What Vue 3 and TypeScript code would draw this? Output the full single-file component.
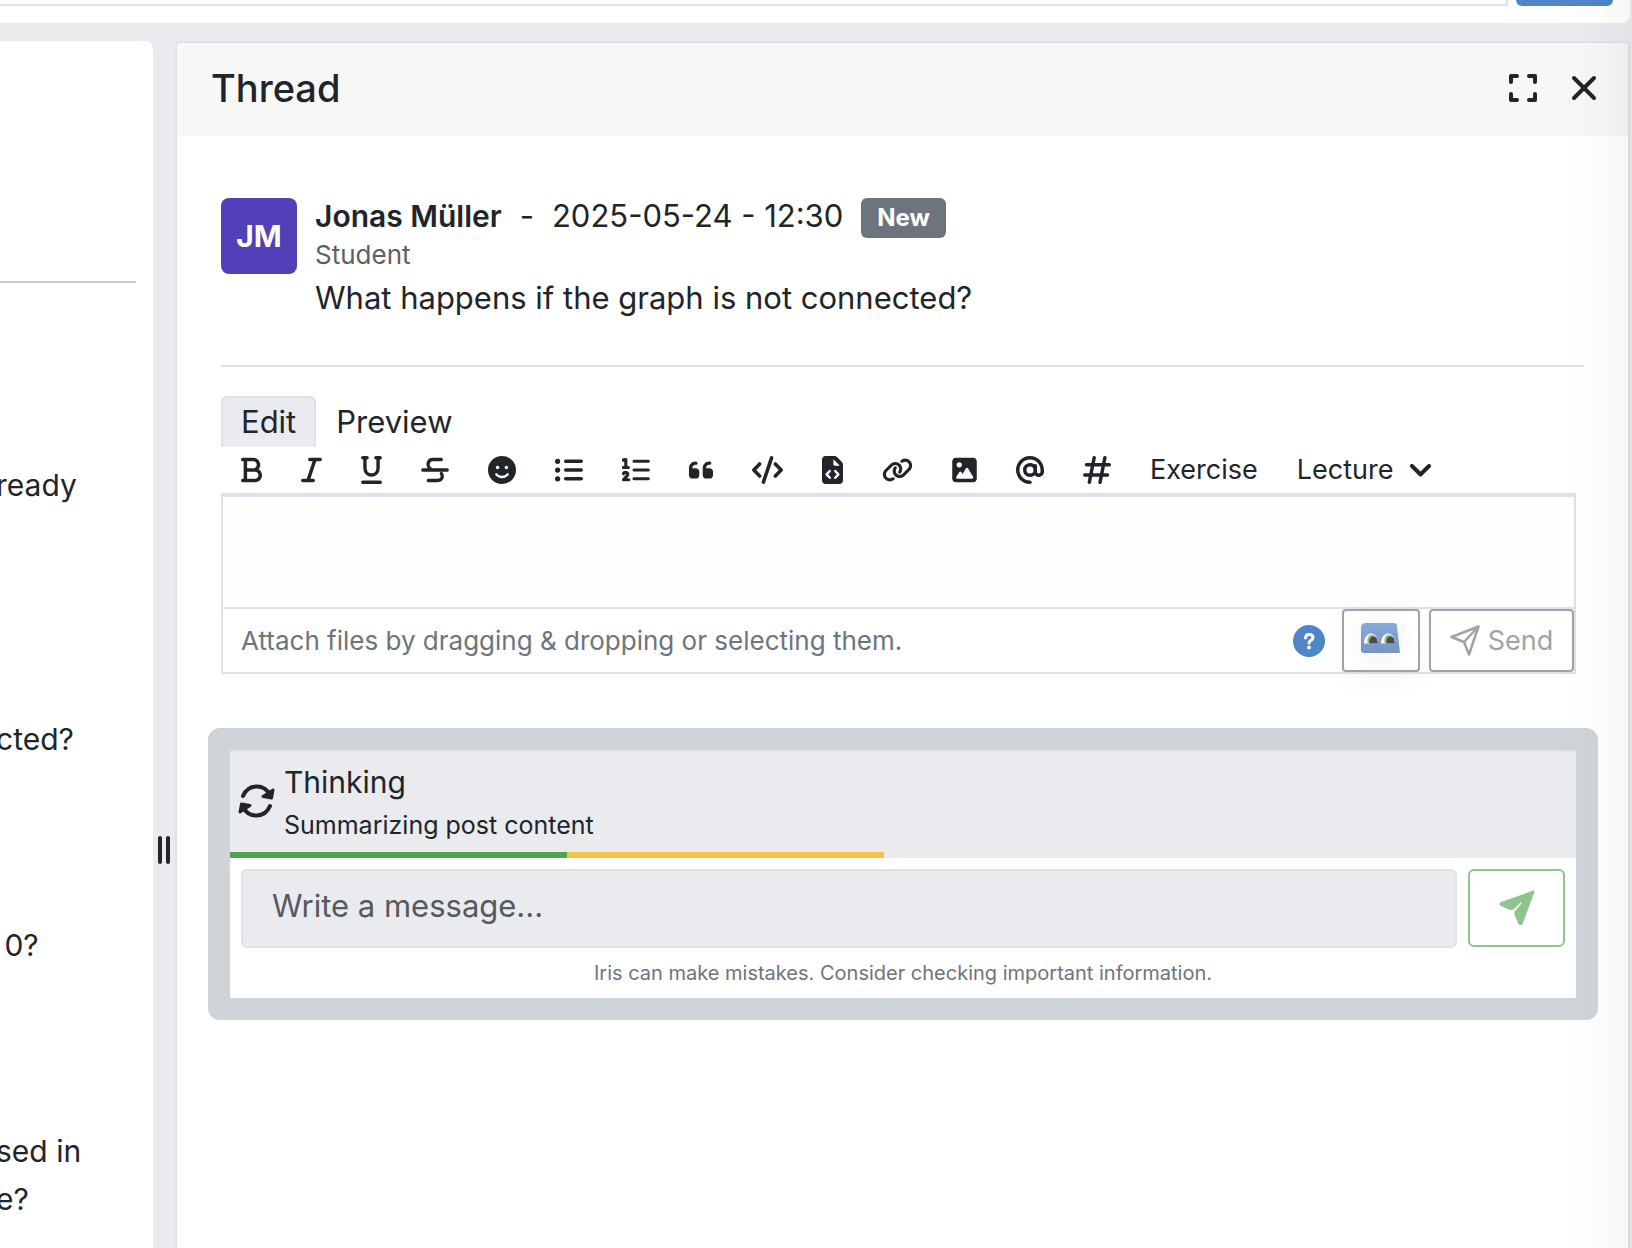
<script setup lang="ts">
import { ref } from 'vue'

interface ToolIcon {
  name: string
  width: number
  box: string
  fill?: string
  line?: string
  stroke?: number
  cutLine?: string
  cutStroke?: number
}

const leftPosts: { lines: string[] }[] = [
  { lines: ['ready'] },
  { lines: ['cted?'] },
  { lines: ['\u00a00?'] },
  { lines: ['sed in', 'e?'] },
]

const tools: ToolIcon[] = [
  {
    name: 'Bold', width: 21, box: '0 0 384 512',
    fill: 'M0 64C0 46 14 32 32 32H224c71 0 128 57 128 128c0 31-11 60-30 82c37 23 62 63 62 110c0 71-57 128-128 128H32c-18 0-32-14-32-32s14-32 32-32H48V96H32C14 96 0 82 0 64zM224 224c35 0 64-29 64-64s-29-64-64-64H112V224zM112 288V416H256c35 0 64-29 64-64s-29-64-64-64z',
  },
  { name: 'Italic', width: 21, box: '0 0 384 512', line: 'M160 64H352M32 448H224M256 64L128 448', stroke: 64 },
  { name: 'Underline', width: 21, box: '0 0 384 512', line: 'M32 32H112M272 32H352M72 32V220C72 390 312 390 312 220V32M32 480H352', stroke: 62 },
  { name: 'Strikethrough', width: 28, box: '0 0 512 512', line: 'M32 256H480M372 64H220C120 64 92 190 190 246M134 448H290C380 448 412 390 372 320', stroke: 60 },
  {
    name: 'Emoji', width: 28, box: '0 0 512 512',
    fill: 'M0 256a256 256 0 1 1 512 0a256 256 0 1 1-512 0zM176 176a32 32 0 1 0 0 64a32 32 0 1 0 0-64zM336 176a32 32 0 1 0 0 64a32 32 0 1 0 0-64z',
    cutLine: 'M152 336C200 400 312 400 360 336', cutStroke: 44,
  },
  {
    name: 'Unordered list', width: 28, box: '0 0 512 512',
    fill: 'M0 96a48 48 0 1 1 96 0a48 48 0 1 1-96 0zM0 256a48 48 0 1 1 96 0a48 48 0 1 1-96 0zM0 416a48 48 0 1 1 96 0a48 48 0 1 1-96 0z',
    line: 'M196 96H480M196 256H480M196 416H480', stroke: 64,
  },
  { name: 'Ordered list', width: 28, box: '0 0 512 512', line: 'M24 76L70 64V204M24 210H116M26 322C50 282 124 300 100 352L28 434H124M220 96H480M220 256H480M220 416H480', stroke: 58 },
  {
    name: 'Quote', width: 24, box: '0 0 448 512',
    fill: 'M0 216C0 149.700 53.700 96 120 96h8c17.700 0 32 14.300 32 32s-14.300 32-32 32h-8c-30.900 0-56 25.100-56 56v8h64c35.300 0 64 28.700 64 64v64c0 35.300-28.700 64-64 64H64c-35.300 0-64-28.700-64-64zm256 0c0-66.300 53.700-120 120-120h8c17.700 0 32 14.300 32 32s-14.300 32-32 32h-8c-30.900 0-56 25.100-56 56v8h64c35.300 0 64 28.700 64 64v64c0 35.300-28.700 64-64 64H320c-35.300 0-64-28.700-64-64z',
  },
  { name: 'Code', width: 31, box: '0 0 576 512', line: 'M364 32L212 480M142 144L34 256L142 368M434 144L542 256L434 368', stroke: 66 },
  {
    name: 'Code block', width: 21, box: '0 0 384 512',
    fill: 'M0 64C0 29 29 0 64 0h165c17 0 33 7 45 19l91 91c12 12 19 28 19 45v293c0 35-29 64-64 64H64c-35 0-64-29-64-64zM208 58v94c0 13 11 24 24 24h94z',
    cutLine: 'M142 274L84 336L142 398M242 274L300 336L242 398', cutStroke: 44,
  },
  {
    name: 'Link', width: 31, box: '0 0 640 512',
    fill: 'M579.800 267.700c56.500-56.500 56.500-148 0-204.500c-50-50-128.800-56.500-186.300-15.400l-1.600 1.100c-14.400 10.300-17.700 30.300-7.400 44.600s30.300 17.700 44.600 7.400l1.600-1.100c32.100-22.900 76-19.300 103.800 8.600c31.500 31.500 31.500 82.500 0 114L422.300 334.800c-31.500 31.500-82.500 31.500-114 0c-27.900-27.900-31.500-71.800-8.600-103.800l1.100-1.600c10.300-14.400 6.900-34.400-7.400-44.600s-34.400-6.900-44.600 7.400l-1.100 1.600C206.500 251.200 213 330 263 380c56.500 56.500 148 56.500 204.500 0zM60.200 244.300c-56.500 56.500-56.500 148 0 204.500c50 50 128.800 56.500 186.300 15.400l1.600-1.100c14.400-10.300 17.700-30.300 7.400-44.600s-30.300-17.700-44.600-7.400l-1.600 1.100c-32.100 22.900-76 19.300-103.800-8.600C74 372 74 321 105.500 289.500L217.700 177.200c31.500-31.500 82.500-31.500 114 0c27.900 27.900 31.500 71.800 8.600 103.900l-1.100 1.600c-10.300 14.400-6.900 34.400 7.400 44.600s34.400 6.900 44.600-7.400l1.100-1.600C433.500 260.800 427 182 377 132c-56.500-56.500-148-56.500-204.500 0z',
    line: 'M60 244',
    stroke: 1,
  },
  {
    name: 'Image', width: 25, box: '0 0 448 512',
    fill: 'M0 96c0-35 29-64 64-64h320c35 0 64 29 64 64v320c0 35-29 64-64 64H64c-35 0-64-29-64-64zM128 112a48 48 0 1 0 0 96a48 48 0 1 0 0-96zM92 416H360c20 0 30-20 20-36L288 226c-8-14-28-14-36 0l-62 102l-24-34c-9-13-27-13-36 0L74 380c-10 16 0 36 18 36z',
  },
  {
    name: 'Mention', width: 28, box: '0 0 512 512',
    fill: 'M256 64C150 64 64 150 64 256s86 192 192 192c17.700 0 32 14.300 32 32s-14.300 32-32 32C114.600 512 0 397.400 0 256S114.600 0 256 0S512 114.600 512 256v32c0 53-43 96-96 96c-29.300 0-55.600-13.200-73.200-33.900C320 371.100 289.500 384 256 384c-70.700 0-128-57.300-128-128s57.300-128 128-128c27.900 0 53.700 8.900 74.700 24.100c5.700-5 13.100-8.100 21.300-8.100c17.700 0 32 14.300 32 32v112c0 17.700 14.300 32 32 32s32-14.300 32-32V256c0-106-86-192-192-192zm64 192a64 64 0 1 0-128 0a64 64 0 1 0 128 0z',
  },
  { name: 'Channel', width: 28, box: '0 0 512 512', line: 'M204 32L116 480M400 32L312 480M64 160H480M32 348H448', stroke: 64 },
]

const progress = [
  { color: '#50a450', share: 25 },
  { color: '#f4c244', share: 23.6 },
]

const activeTab = ref('Edit')
const reply = ref('')
const message = ref('')
const search = ref('')
</script>

<template>
  <div class="page">
    <header class="topbar">
      <input v-model="search" class="search" type="text" aria-label="Search" />
      <button class="search-button" type="button" aria-label="Search"></button>
    </header>

    <div class="columns">
      <section class="posts">
        <hr class="posts-rule" />
        <div class="post-list">
          <p v-for="(post, i) in leftPosts" :key="i" class="post">
            <template v-for="line in post.lines" :key="line">{{ line }}<br /></template>
          </p>
        </div>
      </section>

      <div class="gutter"><i></i><i></i></div>

      <main class="thread">
        <header class="thread-head">
          <h1>Thread</h1>
          <button type="button" aria-label="Expand">
            <svg width="28" height="28" viewBox="0 0 28 28" fill="none" stroke="currentColor" stroke-width="4" stroke-linecap="round" stroke-linejoin="round">
              <path d="M2 8V2H8M20 2H26V8M2 20V26H8M20 26H26V20" />
            </svg>
          </button>
          <button type="button" aria-label="Close">
            <svg width="28" height="28" viewBox="0 0 28 28" fill="none" stroke="currentColor" stroke-width="4" stroke-linecap="round">
              <path d="M4 4L24 24M24 4L4 24" />
            </svg>
          </button>
        </header>

        <div class="thread-body">
          <article class="message">
            <div class="avatar">JM</div>
            <div class="message-text">
              <div class="byline">
                <strong>Jonas Müller</strong>
                <span>-</span>
                <time>2025-05-24 - 12:30</time>
                <span class="badge">New</span>
              </div>
              <div class="role">Student</div>
              <p class="question">What happens if the graph is not connected?</p>
            </div>
          </article>

          <section class="editor">
            <div class="tabs">
              <button
                v-for="tab in ['Edit', 'Preview']"
                :key="tab"
                type="button"
                class="tab"
                :class="{ active: activeTab === tab }"
                @click="activeTab = tab"
              >{{ tab }}</button>
            </div>
            <div class="toolbar">
              <button v-for="tool in tools" :key="tool.name" type="button" :aria-label="tool.name">
                <svg :width="tool.width" height="28" :viewBox="tool.box" fill="none" stroke-linecap="round" stroke-linejoin="round">
                  <path v-if="tool.fill" :d="tool.fill" fill="currentColor" fill-rule="evenodd" />
                  <path v-if="tool.line" :d="tool.line" stroke="currentColor" :stroke-width="tool.stroke" />
                  <path v-if="tool.cutLine" :d="tool.cutLine" stroke="#fff" :stroke-width="tool.cutStroke" />
                </svg>
              </button>
              <button type="button">Exercise</button>
              <button type="button" class="lecture">
                Lecture
                <svg width="21" height="13" viewBox="0 0 21 13" fill="none" stroke="currentColor" stroke-width="4" stroke-linecap="round" stroke-linejoin="round">
                  <path d="M2 2L10.500 10.500L19 2" />
                </svg>
              </button>
            </div>
            <div class="field">
              <textarea v-model="reply" aria-label="Reply"></textarea>
              <div class="field-foot">
                <span class="attach">Attach files by dragging &amp; dropping or selecting them.</span>
                <button type="button" class="help" aria-label="Help">
                  <svg width="32" height="32" viewBox="0 0 32 32" fill="none">
                    <circle cx="16" cy="16" r="16" fill="#4f86c9" />
                    <path d="M12.500 13C12.500 8 20 8.500 20 12.500C20 15.500 16 15.500 16 18" stroke="#fff" stroke-width="3" stroke-linecap="round" />
                    <circle cx="16" cy="22.500" r="2" fill="#fff" />
                  </svg>
                </button>
                <button type="button" class="outlined iris" aria-label="Ask Iris">
                  <svg width="40" height="38" viewBox="0 0 40 38">
                    <defs>
                      <linearGradient id="irisBody" x1="0" y1="0" x2="0" y2="1">
                        <stop offset="0" stop-color="#86a9dc" />
                        <stop offset="1" stop-color="#7695c3" />
                      </linearGradient>
                    </defs>
                    <path d="M4 32H38L39 37Q24 33 4 32Z" fill="#fff" />
                    <path d="M5 1H32Q36 1 36 4L39 31H3Q0 31 0 28V6Q0 1 5 1Z" fill="url(#irisBody)" />
                    <path d="M3 21.500C3 8 17 8 17 21.500Z" fill="#fff" />
                    <path d="M20 21.500C20 8 34 8 34 21.500Z" fill="#fff" />
                    <path d="M6.500 21C5.500 14 10 10.500 14 14L16 18L9 21.500Z" fill="#8cc070" />
                    <path d="M23.500 21C22.500 14 27 10.500 31 14L33 18L26 21.500Z" fill="#8cc070" />
                    <path d="M8.500 21.500C7 14.500 14 12.500 16 17L17 21.500Z" fill="#4b4b4f" />
                    <path d="M25.500 21.500C24 14.500 31 12.500 33 17L34 21.500Z" fill="#4b4b4f" />
                  </svg>
                </button>
                <button type="button" class="outlined send">
                  <svg width="30" height="31" viewBox="0 0 30 31" fill="none" stroke="currentColor" stroke-width="2.500" stroke-linejoin="round">
                    <path d="M28.500 1.500L1.500 12L14 17L19 29.500Z" />
                    <path d="M28.500 1.500L14 17" />
                  </svg>
                  Send
                </button>
              </div>
            </div>
          </section>

          <section class="chat">
            <div class="status">
              <svg width="37" height="34" viewBox="0 0 37 34" fill="none" stroke="currentColor" stroke-width="4" stroke-linecap="round" stroke-linejoin="round">
                <path d="M5 12C10 0 26-1 32 11" />
                <path d="M35 6L33.500 14L25 12.500Z" fill="currentColor" stroke-width="3" />
                <path d="M32 22C27 34 11 35 5 23" />
                <path d="M2 28L3.500 20L12 21.500Z" fill="currentColor" stroke-width="3" />
              </svg>
              <div>
                <div class="status-title">Thinking</div>
                <div class="status-sub">Summarizing post content</div>
              </div>
            </div>
            <div class="progress">
              <span v-for="part in progress" :key="part.color" :style="{ width: part.share + '%', background: part.color }"></span>
            </div>
            <form class="compose" @submit.prevent>
              <input v-model="message" type="text" placeholder="Write a message..." aria-label="Write a message" />
              <button type="submit" aria-label="Send message">
                <svg width="36" height="36" viewBox="0 0 36 36" fill="currentColor">
                  <path d="M33 1C35 0 36 1 35 3L24 33C23 36 20 36 19 33L16 26C15 23 15 22 17 20L22 14C23 13 22 12 21 13L15 19C14 20 13 20 11 20L2 16C0 15 0 13 2 12Z" />
                </svg>
              </button>
            </form>
            <p class="disclaimer">Iris can make mistakes. Consider checking important information.</p>
          </section>
        </div>
      </main>
    </div>
    <div class="edge-shade"></div>
  </div>
</template>

<style>
body {
  margin: 0;
}
</style>

<style scoped>
* {
  box-sizing: border-box;
}
.page {
  position: relative;
  display: flex;
  flex-direction: column;
  gap: 18px;
  min-height: 100vh;
  overflow: hidden;
  background: #eaebef;
  color: #212529;
  font-family: Inter, "Liberation Sans", sans-serif;
  font-size: 31px;
  line-height: 48px;
}
button,
input,
textarea {
  font: inherit;
  color: inherit;
}
button {
  padding: 0;
  border: 0;
  background: none;
  cursor: pointer;
}
svg {
  display: block;
  flex: none;
}
.topbar {
  display: flex;
  align-items: flex-start;
  gap: 8px;
  height: 23px;
  margin-right: 2px;
  padding-right: 17px;
  background: #fff;
  border-bottom-right-radius: 8px;
}
.search {
  flex: 1;
  height: 6px;
  padding: 0;
  border: solid #dee2e6;
  border-width: 0 2px 2px 0;
  background: #fff;
}
.search-button {
  width: 97px;
  height: 6px;
  border-radius: 0 0 6px 6px;
  background: #4f86c9;
}
.columns {
  display: flex;
  flex: 1;
}
.posts {
  width: 153px;
  background: #fff;
  border-top-right-radius: 8px;
}
.posts-rule {
  height: 2px;
  margin: 240px 17px 0 0;
  border: 0;
  background: #c5c7c9;
}
.post-list {
  display: flex;
  flex-direction: column;
  gap: 158px;
  padding-top: 178px;
  margin-left: -4px;
  font-size: 30px;
}
.post {
  margin: 0;
}
.post:first-child {
  margin-bottom: 48px;
}
.gutter {
  display: flex;
  justify-content: center;
  gap: 4px;
  width: 22px;
  padding-top: 795px;
}
.gutter i {
  width: 4px;
  height: 28px;
  border-radius: 2px;
  background: #212529;
}
.thread {
  flex: 1;
  margin-right: 2px;
  border: 2px solid #dee2e6;
  border-bottom: 0;
  border-radius: 6px 6px 0 0;
  background: #fff;
}
.thread-head {
  display: flex;
  align-items: center;
  gap: 33px;
  height: 93px;
  padding: 0 30px 4px 34px;
  border-radius: 4px 4px 0 0;
  background: #f7f7f7;
}
.thread-head h1 {
  flex: 1;
  margin: 0;
  font-size: 38px;
  font-weight: 500;
}
.thread-body {
  padding: 62px 30px 40px 31px;
}
.message {
  display: flex;
  gap: 18px;
  margin: 0 14px 0 13px;
  padding-bottom: 43px;
  border-bottom: 2px solid #dee2e6;
}
.avatar {
  width: 76px;
  height: 76px;
  border-radius: 8px;
  background: #5140b8;
  color: #fff;
  font-size: 30px;
  font-weight: 700;
  line-height: 76px;
  text-align: center;
}
.byline {
  display: flex;
  align-items: flex-start;
  gap: 18px;
  height: 38px;
  line-height: 36px;
}
.byline strong {
  font-size: 30px;
  font-weight: 600;
}
.badge {
  height: 40px;
  padding: 0 16px;
  border-radius: 6px;
  background: #6c757d;
  color: #fff;
  font-size: 24px;
  font-weight: 700;
  line-height: 40px;
}
.role {
  color: #5c5f63;
  font-size: 26px;
  line-height: 38px;
}
.question {
  margin: 0;
}
.editor {
  margin: 29px 22px 0 13px;
}
.tabs {
  display: flex;
}
.tab {
  height: 51px;
  padding: 0 18px 3px;
  border: 2px solid transparent;
  border-bottom: 0;
  border-radius: 6px 6px 0 0;
}
.tab.active {
  border-color: #dee2e6;
  background: #eaebef;
}
.toolbar {
  display: flex;
  align-items: center;
  gap: 39px;
  height: 46px;
  padding-left: 20px;
  font-size: 27px;
}
.lecture {
  display: flex;
  align-items: center;
  gap: 17px;
}
.field {
  border: 2px solid #dee2e6;
  border-top-width: 4px;
}
.field textarea {
  display: block;
  width: 100%;
  height: 110px;
  padding: 10px 18px;
  border: 0;
  outline: 0;
  resize: none;
  background: #fefefc;
}
.field-foot {
  display: flex;
  align-items: center;
  height: 65px;
  border-top: 2px solid #dee2e6;
}
.attach {
  flex: 1;
  padding-left: 18px;
  color: #6c757d;
  font-size: 26px;
}
.help {
  margin-right: 17px;
}
.outlined {
  display: flex;
  align-items: center;
  justify-content: center;
  height: 63px;
  border: 2px solid #9ea3a9;
  border-radius: 4px;
}
.iris {
  width: 78px;
  margin-right: 9px;
  background: radial-gradient(circle, #f0f0f0, #fff 75%);
  box-shadow: 0 6px 30px rgba(0, 0, 0, 0.04);
}
.send {
  gap: 8px;
  width: 145px;
  color: #9ea3a9;
  font-size: 27px;
}
.chat {
  margin-top: 54px;
  border: 22px solid #ced4d8;
  border-radius: 12px;
  background: #fff;
}
.status {
  display: flex;
  align-items: center;
  gap: 9px;
  height: 102px;
  padding: 0 0 2px 8px;
  border-top: 2px solid #dee2e6;
  background: #eaebef;
}
.status-title {
  font-size: 30px;
}
.status-sub {
  font-size: 25px;
  line-height: 38px;
}
.progress {
  display: flex;
  height: 6px;
  background: #eaebef;
}
.compose {
  display: flex;
  gap: 11px;
  padding: 11px 11px 0;
}
.compose input {
  flex: 1;
  min-width: 0;
  height: 79px;
  padding: 0 29px 7px;
  border: 2px solid #dee2e6;
  border-radius: 6px;
  outline: 0;
  background: #eaebef;
}
.compose input::placeholder {
  color: #56595d;
  opacity: 1;
}
.compose button {
  display: flex;
  align-items: center;
  justify-content: center;
  width: 97px;
  height: 78px;
  border: 2px solid #8fc48f;
  border-radius: 6px;
  color: #8fc48f;
}
.disclaimer {
  margin: 0;
  padding: 10px 0;
  color: #6c757d;
  font-size: 20px;
  line-height: 30px;
  text-align: center;
}
.edge-shade {
  position: absolute;
  inset: 0 0 0 auto;
  width: 72px;
  background: linear-gradient(to right, transparent, rgba(0, 0, 0, 0.01) 50%, rgba(0, 0, 0, 0.035));
  pointer-events: none;
}
</style>
